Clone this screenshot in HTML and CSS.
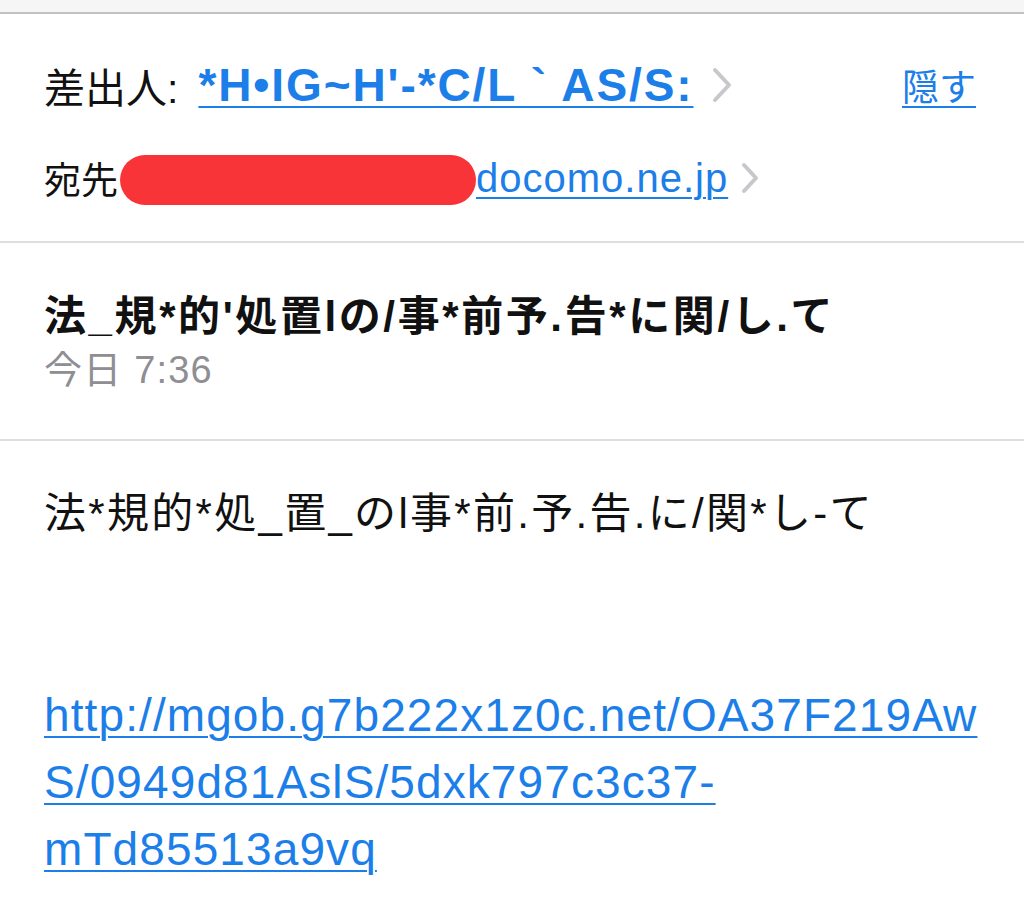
FILE: index.html
```html
<!DOCTYPE html>
<html lang="ja">
<head>
<meta charset="utf-8">
<title>メール</title>
<link rel="stylesheet" href="styles.css">
</head>
<body>
<div class="topbar"></div>
<section class="header">
  <div class="row row-from">
    <span class="label">差出人:</span>
    <a class="sender" href="#">*H•IG~H'-*C/L ` AS/S:</a>
    <svg class="chev" width="22" height="36" viewBox="0 0 22 36"><path d="M4 3 L18 18 L4 33" fill="none" stroke="#c7c7cc" stroke-width="4" stroke-linecap="round" stroke-linejoin="round"/></svg>
    <span class="spacer"></span>
    <a class="hide" href="#">隠す</a>
  </div>
  <div class="row row-to">
    <span class="label-to">宛先</span>
    <span class="redact"></span>
    <a class="to-addr" href="#">docomo.ne.jp</a>
    <svg class="chev2" width="20" height="32" viewBox="0 0 20 32"><path d="M4 3 L16 16 L4 29" fill="none" stroke="#c7c7cc" stroke-width="4" stroke-linecap="round" stroke-linejoin="round"/></svg>
  </div>
</section>
<section class="subject-block">
  <div class="subject">法_規*的'処置lの/事*前予.告*に関/し.て</div>
  <div class="date">今日 7:36</div>
</section>
<section class="body-block">
  <p class="body-text">法*規的*処_置_のl事*前.予.告.に/関*し-て</p>
  <p class="url"><a href="#">http://mgob.g7b222x1z0c.net/OA37F219Aw<br>S/0949d81AslS/5dxk797c3c37-<br>mTd85513a9vq</a></p>
</section>
</body>
</html>
```
FILE: styles.css
```css
html, body {
  margin: 0;
  padding: 0;
  background: #ffffff;
}
body {
  font-family: "Liberation Sans", "Noto Sans CJK JP", sans-serif;
  color: #111111;
  width: 1024px;
  overflow: hidden;
}
a {
  color: #1c7ee8;
  text-decoration: underline;
  text-decoration-thickness: 2px;
  text-underline-offset: 5px;
}
.topbar {
  height: 12px;
  background: #f6f6f6;
  border-bottom: 2px solid #c2c2c2;
}
.header {
  padding: 48px 0 40px 44px;
  border-bottom: 2px solid #dedede;
}
.row {
  display: flex;
  align-items: center;
  height: 46px;
  white-space: nowrap;
}
.row-to {
  margin-top: 47px;
}
.label {
  font-size: 41px;
  margin-right: 20px;
}
.sender {
  font-size: 46px;
  font-weight: bold;
  letter-spacing: 1.9px;
}
.chev {
  margin-left: 18px;
}
.spacer {
  flex: 1;
}
.hide {
  font-size: 37px;
  margin-right: 48px;
}
.label-to {
  font-size: 37px;
}
.redact {
  display: inline-block;
  width: 356px;
  height: 50px;
  border-radius: 25px;
  background: #f93438;
  margin-left: 2px;
  margin-top: 4px;
}
.to-addr {
  font-size: 40px;
  letter-spacing: 1px;
}
.chev2 {
  margin-left: 12px;
}
.subject-block {
  padding: 51px 0 49px 44px;
  border-bottom: 2px solid #dedede;
}
.subject {
  font-size: 42px;
  font-weight: bold;
  line-height: 46px;
  letter-spacing: 2.6px;
  white-space: nowrap;
}
.date {
  font-size: 38px;
  line-height: 40px;
  letter-spacing: 1.2px;
  color: #8e8e93;
  margin-top: 10px;
}
.body-block {
  padding: 50px 0 0 44px;
}
.body-text {
  margin: 0;
  font-size: 42px;
  line-height: 46px;
  letter-spacing: 2.3px;
  white-space: nowrap;
}
.url {
  margin: 145px 0 0 0;
  font-size: 46px;
  line-height: 67px;
  letter-spacing: 1.1px;
  white-space: nowrap;
}
```
